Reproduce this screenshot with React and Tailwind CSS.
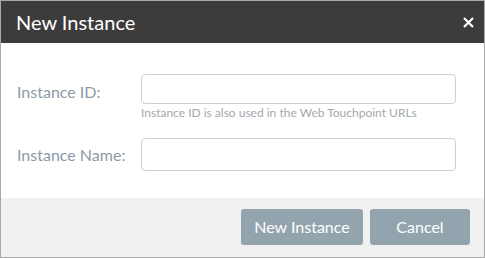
import React from 'react';

export default function App() {
	return (
		<div className="w-[485px] h-[258px] border border-[#a9a9a9] bg-white flex flex-col font-['Lato',sans-serif]">
			<div className="h-[42px] bg-[#3c3c3c] flex items-center justify-between pl-[15px] pr-[10px] shrink-0">
				<span className="text-white text-[20px] leading-none">New Instance</span>
				<svg className="w-[11px] h-[11px]" viewBox="0 0 11 11" fill="none" stroke="white" strokeWidth="2.2">
					<path d="M1 1l9 9M10 1l-9 9" />
				</svg>
			</div>

			<div className="flex-1 pt-[31px] pl-4 pr-[28px]">
				<div className="flex items-start">
					<label className="w-[124px] pt-[6px] text-[16px] text-[#8b9ba7]">Instance ID:</label>
					<div className="flex-1">
						<input className="w-full h-[30px] border border-[#cfcfcf] rounded-[4px] outline-none px-2" />
						<div className="text-[12px] text-[#a3a9ad] mt-[1px] leading-4">Instance ID is also used in the Web Touchpoint URLs</div>
					</div>
				</div>
				<div className="flex items-center mt-[17px]">
					<label className="w-[124px] text-[16px] text-[#8b9ba7]">Instance Name:</label>
					<input className="flex-1 h-[33px] border border-[#cfcfcf] rounded-[4px] outline-none px-2" />
				</div>
			</div>

			<div className="h-[59px] bg-[#f1f1f1] flex items-start justify-end gap-[7px] pt-[11px] pr-[14px] shrink-0">
				<button className="w-[122px] h-[36px] bg-[#94a4ae] text-white text-[16px] rounded-[3px]">New Instance</button>
				<button className="w-[100px] h-[36px] bg-[#94a4ae] text-white text-[16px] rounded-[3px]">Cancel</button>
			</div>
		</div>
	);
}
